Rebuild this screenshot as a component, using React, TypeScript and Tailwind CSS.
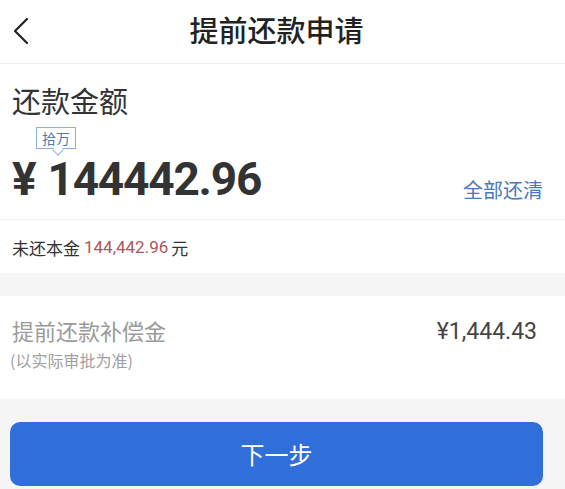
import React from "react";

export default function App() {
  const cjk = { fontFamily: '"Noto Sans CJK SC", "Noto Sans", sans-serif' };
  const num = { fontFamily: 'Roboto, "Noto Sans CJK SC", sans-serif' };
  return (
    <div className="w-[565px] h-[489px] bg-[#f5f5f5] overflow-hidden" style={cjk}>
      {/* Header */}
      <div className="relative h-[64px] bg-white flex items-center justify-center border-b border-[#eeeeee]">
        <svg className="absolute left-[12px] top-[17px]" width="18" height="28" viewBox="0 0 18 28">
          <path d="M15 2 L3 14 L15 26" fill="none" stroke="#222" strokeWidth="2.2" strokeLinecap="round" strokeLinejoin="round" />
        </svg>
        <div className="text-[29px] font-medium text-[#222] leading-none mt-[-4px] mr-[12px]">提前还款申请</div>
      </div>

      {/* Amount section */}
      <div className="bg-white">
        <div className="px-[12px] pt-[22px] h-[156px] border-b border-[#efefef] flex flex-col">
          <div className="text-[29px] text-[#333] leading-none">还款金额</div>
          <div className="relative mt-[12px] ml-[24px] w-fit">
            <div className="border border-[#8fb0de] px-[5px] h-[22px] flex items-center text-[14px] text-[#4f78b3] leading-none bg-white">拾万</div>
            <div className="absolute left-[18px] bottom-[-5px] w-[8px] h-[8px] bg-white border-r border-b border-[#8fb0de] rotate-45"></div>
          </div>
          <div className="flex items-end justify-between mt-[7px]">
            <div className="text-[46px] font-bold text-[#333] leading-none tracking-[-1.2px]" style={num}>
              ¥<span className="ml-[12px]">144442.96</span>
            </div>
            <div className="text-[20px] text-[#4a78b8] leading-none mb-[2px] mr-[10px]">全部还清</div>
          </div>
        </div>
        <div className="h-[53px] px-[12px] flex items-center text-[17px] text-[#333] leading-none pt-[2px]">
          <span>未还本金</span>
          <span className="ml-[4px] text-[#a9575a]" style={num}>144,442.96</span>
          <span className="ml-[3px]">元</span>
        </div>
      </div>

      {/* Compensation section */}
      <div className="mt-[23px] bg-white h-[103px] px-[12px] flex justify-between">
        <div className="pt-[23px]">
          <div className="text-[22px] text-[#9a9a9a] leading-none">提前还款补偿金</div>
          <div className="text-[16px] text-[#a0a0a0] leading-none mt-[11px] ml-[-2px]">(以实际审批为准)</div>
        </div>
        <div className="pt-[24px] pr-[16px] text-[23px] text-[#444] leading-none" style={num}>¥1,444.43</div>
      </div>

      {/* Button */}
      <div className="pt-[23px] px-[10px]">
        <div className="w-[533px] h-[64px] rounded-[10px] bg-[#306ed9] flex items-center justify-center text-white text-[24px]">
          下一步
        </div>
      </div>
    </div>
  );
}
